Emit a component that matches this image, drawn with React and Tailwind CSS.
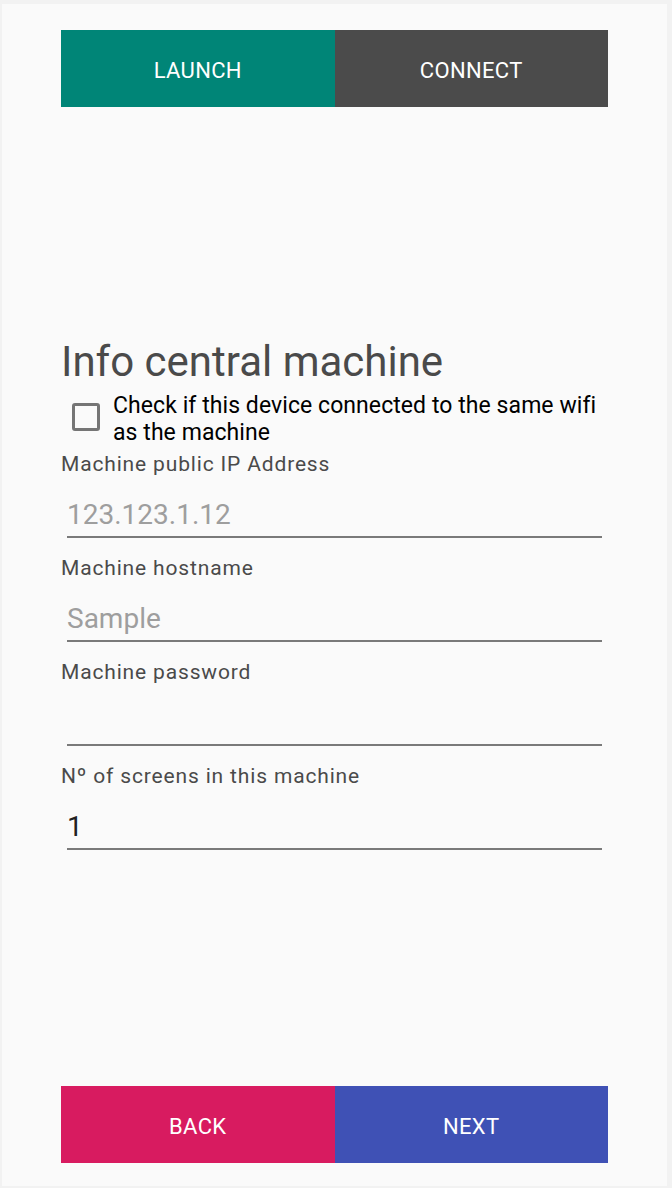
export default function App() {
  const font = { fontFamily: 'Roboto, "Noto Sans", sans-serif' };
  const Field = ({ label, value, placeholder }) => (
    <div className="flex flex-col">
      <div className="h-[28px] text-[21px] leading-[28px] tracking-[0.04em] text-[#4a4a4a] whitespace-nowrap">{label}</div>
      <div className="mx-[6px] mt-[20px] h-[40px] border-b-2 border-[#7a7a7a] text-[28px] leading-[33px]">
        {value ? (
          <span className="text-[#212121]">{value}</span>
        ) : (
          <span className="text-[#9e9e9e]">{placeholder}</span>
        )}
      </div>
    </div>
  );
  const Btn = ({ bg, children }) => (
    <div className={`flex-1 ${bg} text-white text-[22px] tracking-[0.015em] pt-[3px] flex items-center justify-center`}>{children}</div>
  );
  return (
    <div className="w-[672px] h-[1188px] bg-[#f2f2f2] pt-[4px] pl-[2px] pr-[5px] pb-[2px]" style={font}>
      <div className="h-full bg-[#fafafa] px-[59px] pt-[26px] flex flex-col">
        <div className="flex h-[77px]">
          <Btn bg="bg-[#008577]">LAUNCH</Btn>
          <Btn bg="bg-[#4b4b4b]">CONNECT</Btn>
        </div>
        <div className="mt-[231px] h-[48px] text-[42px] leading-[48px] text-[#4a4a4a]">Info central machine</div>
        <div className="flex items-start mt-[6px]">
          <div className="ml-[11px] mt-[11px] w-[28px] h-[28px] border-[3px] border-[#757575] rounded-[3px] shrink-0"></div>
          <div className="ml-[13px] text-[23px] leading-[27px] tracking-[0.003em] text-black whitespace-nowrap">
            Check if this device connected to the same wifi
            <br />
            as the machine
          </div>
        </div>
        <div className="flex flex-col gap-[16px] mt-[4px]">
          <Field label="Machine public IP Address" placeholder="123.123.1.12" />
          <Field label="Machine hostname" placeholder="Sample" />
          <Field label="Machine password" placeholder="" />
          <Field label="Nº of screens in this machine" value="1" />
        </div>
        <div className="mt-auto mb-[23px] flex h-[77px]">
          <Btn bg="bg-[#d81b60]">BACK</Btn>
          <Btn bg="bg-[#3f51b5]">NEXT</Btn>
        </div>
      </div>
    </div>
  );
}
